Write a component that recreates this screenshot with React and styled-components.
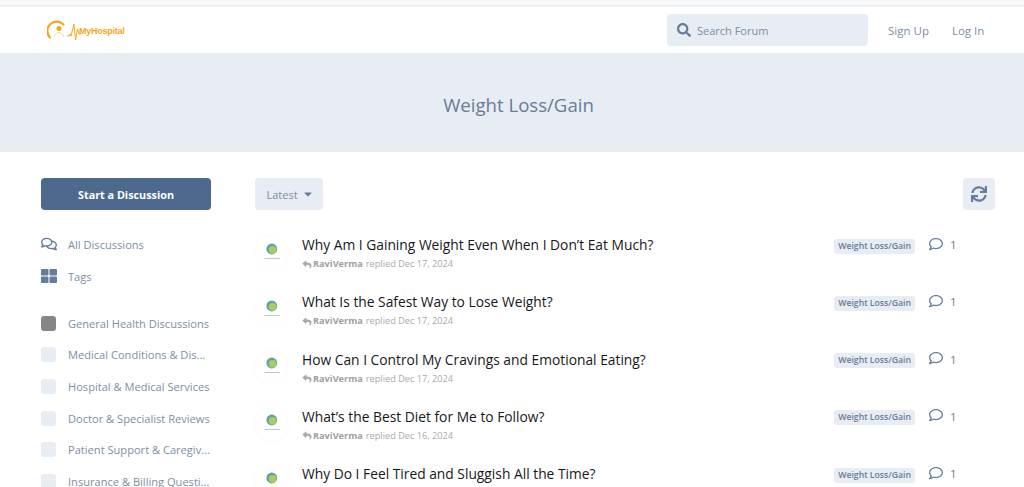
import React from 'react';
import styled, { createGlobalStyle } from 'styled-components';
import { FaSearch, FaSync, FaReply, FaRegComment, FaRegComments, FaThLarge, FaCaretDown } from 'react-icons/fa';

const Global = createGlobalStyle`
  html, body { margin: 0; padding: 0; background: #fff; }
  body { font-family: "Open Sans", "Liberation Sans", sans-serif; height: 487px; overflow: hidden; }
  * { box-sizing: border-box; }
`;

const Page = styled.div`height: 487px; overflow: hidden;`;
const TopStrip = styled.div`height: 7px; background: #f7f8fa; border-bottom: 2px solid #eeeff1;`;
const Header = styled.header`
  height: 46px; display: flex; align-items: center; padding: 0 40px 0 47px; background: #fff;
`;
const Logo = styled.div`display: flex; align-items: center; width: 620px; height: 46px; flex: none;`;
const LogoText = styled.span`
  font-family: "Liberation Sans", sans-serif; font-size: 9px; font-weight: 700; letter-spacing: -0.25px;
  color: #f9a51a; margin-left: -10px; margin-top: 1px;
`;
const Search = styled.div`
  width: 201px; height: 32px; background: #e8ecf3; border-radius: 4px; display: flex; align-items: center;
  padding-left: 10px; gap: 6px; color: #667d99; font-size: 11px; margin-right: 20px; flex: none;
`;
const SearchText = styled.span`color: #7d8ea5; font-size: 11px; margin-top: 1px;`;
const NavLink = styled.a`color: #7d8ea5; font-size: 11.5px; margin-right: 23px; white-space: nowrap; &:last-child { margin-right: 0; }`;
const Hero = styled.section`
  height: 99px; padding: 4px 0 0 13px; background: #e8ecf3; display: flex; align-items: center; justify-content: center;
  color: #667d99; font-size: 18.6px;
`;
const Container = styled.div`display: flex; padding: 26px 29px 0 41px;`;
const Side = styled.aside`width: 170px; margin-right: 44px; flex: none;`;
const Primary = styled.button`
  width: 170px; height: 32px; background: #4d698e; color: #fff; border: 0; border-radius: 4px;
  font: 700 10.8px "Open Sans", sans-serif; display: block; margin-bottom: 19px;
`;
const NavItem = styled.div`
  display: flex; align-items: center; height: 31.7px; color: #7d8ea5; font-size: 11.1px;
  svg { width: 16px; height: 16px; color: #667d99; margin-right: 11px; flex: none; margin-top: -2px; }
`;
const Cats = styled.div`margin-top: 15px;`;
const Swatch = styled.span`
  width: 15px; height: 15px; border-radius: 3px; background: ${p => p.$dark ? '#868686' : '#e8ecf3'};
  margin-right: 12px; flex: none;
`;
const CatLabel = styled.span`white-space: nowrap;`;
const Main = styled.main`flex: 1; min-width: 0;`;
const Toolbar = styled.div`display: flex; justify-content: space-between; margin-bottom: 25px;`;
const Sort = styled.button`
  width: 68px; height: 32px; background: #e8ecf3; border: 0; border-radius: 4px; color: #7d8ea5;
  font: 11px "Open Sans", sans-serif; display: flex; align-items: center; justify-content: center; gap: 4px;
  padding-left: 8px;
  svg { width: 12px; height: 12px; color: #667d99; }
`;
const Refresh = styled.button`
  width: 32px; height: 32px; background: #e8ecf3; border: 0; border-radius: 4px; color: #667d99;
  display: flex; align-items: center; justify-content: center; padding: 0;
  svg { width: 16px; height: 16px; }
`;
const Row = styled.div`display: flex; align-items: flex-start; height: 57.3px; padding-right: 28px;`;
const Avatar = styled.div`
  width: 33px; height: 33px; border-radius: 50%; background: #fff; box-shadow: 0 0 2px rgba(0,0,0,.05);
  margin: 1px 14px 0 0; flex: none; display: flex; align-items: center; justify-content: center;
`;
const Body = styled.div`flex: 1; min-width: 0;`;
const Title = styled.div`font-size: 13.8px; line-height: 19px; color: #17181c;`;
const Meta = styled.div`
  font-size: 9.2px; line-height: 12px; color: #a9a9a9; display: flex; align-items: center; margin-top: 4px;
  svg { width: 10px; height: 9px; margin-right: 1px; color: #a9a9a9; }
  b { color: #a0a0a0; margin-right: 3px; }
`;
const Tag = styled.span`
  background: #e8ecf3; color: #667d99; font-size: 8.7px; font-weight: 600; line-height: 15px; height: 15px;
  border-radius: 3px; padding: 0 4px; margin: 3.5px 14px 0 0; white-space: nowrap;
`;
const Count = styled.div`
  width: 38px; flex: none; display: flex; align-items: center; gap: 7px; color: #667d99; font-size: 11.5px; line-height: 16px;
  margin-top: 2px;
  svg { width: 14px; height: 14px; margin-top: -3px; }
`;

const AvatarArt = () => (
  <svg width="20" height="20" viewBox="0 0 20 20">
    <circle cx="9.800" cy="6" r="5.400" fill="#5aa3a8" />
    <circle cx="10.600" cy="6.800" r="3.900" fill="#a9cb62" />
    <rect x="2.500" y="15" width="15.500" height="1" fill="#b5cbd6" />
  </svg>
);

const LogoArt = () => (
  <svg width="42" height="24" viewBox="0 0 42 24" fill="none">
    <path d="M3 19.500a8.500 8.500 0 0 1 13.500 -13" stroke="#f9a51a" strokeWidth="2.200" strokeLinecap="round" />
    <circle cx="12" cy="10.500" r="2.500" fill="#f9a51a" />
    <path d="M7 19c1 -3 3 -4.500 5 -4.500s4 1.500 5 4.500" stroke="#f9d79c" strokeWidth="1" />
    <path d="M20 18h2l1 -2 1 2 1.500 -6 1.500 -6 1.500 16 2 -11 1.500 5h2" stroke="#f9a51a" strokeWidth="1" />
  </svg>
);

const cats = [
  'General Health Discussions', 'Medical Conditions & Dis...', 'Hospital & Medical Services',
  'Doctor & Specialist Reviews', 'Patient Support & Caregiv...', 'Insurance & Billing Questi...',
];
const rows = [
  ['Why Am I Gaining Weight Even When I Don’t Eat Much?', 'Dec 17, 2024'],
  ['What Is the Safest Way to Lose Weight?', 'Dec 17, 2024'],
  ['How Can I Control My Cravings and Emotional Eating?', 'Dec 17, 2024'],
  ['What’s the Best Diet for Me to Follow?', 'Dec 16, 2024'],
  ['Why Do I Feel Tired and Sluggish All the Time?', 'Dec 16, 2024'],
];

export default function App() {
  return (
    <Page>
      <Global />
      <TopStrip />
      <Header>
        <Logo><LogoArt /><LogoText>MyHospital</LogoText></Logo>
        <Search><FaSearch size={14} /><SearchText>Search Forum</SearchText></Search>
        <NavLink>Sign Up</NavLink>
        <NavLink>Log In</NavLink>
      </Header>
      <Hero>Weight Loss/Gain</Hero>
      <Container>
        <Side>
          <Primary>Start a Discussion</Primary>
          <NavItem><FaRegComments />All Discussions</NavItem>
          <NavItem><FaThLarge />Tags</NavItem>
          <Cats>
            {cats.map((c, i) => (
              <NavItem key={c}><Swatch $dark={i === 0} /><CatLabel>{c}</CatLabel></NavItem>
            ))}
          </Cats>
        </Side>
        <Main>
          <Toolbar>
            <Sort>Latest <FaCaretDown /></Sort>
            <Refresh><FaSync /></Refresh>
          </Toolbar>
          {rows.map(([t, d]) => (
            <Row key={t}>
              <Avatar><AvatarArt /></Avatar>
              <Body>
                <Title>{t}</Title>
                <Meta><FaReply /><b>RaviVerma</b> replied {d}</Meta>
              </Body>
              <Tag>Weight Loss/Gain</Tag>
              <Count><FaRegComment />1</Count>
            </Row>
          ))}
        </Main>
      </Container>
    </Page>
  );
}
